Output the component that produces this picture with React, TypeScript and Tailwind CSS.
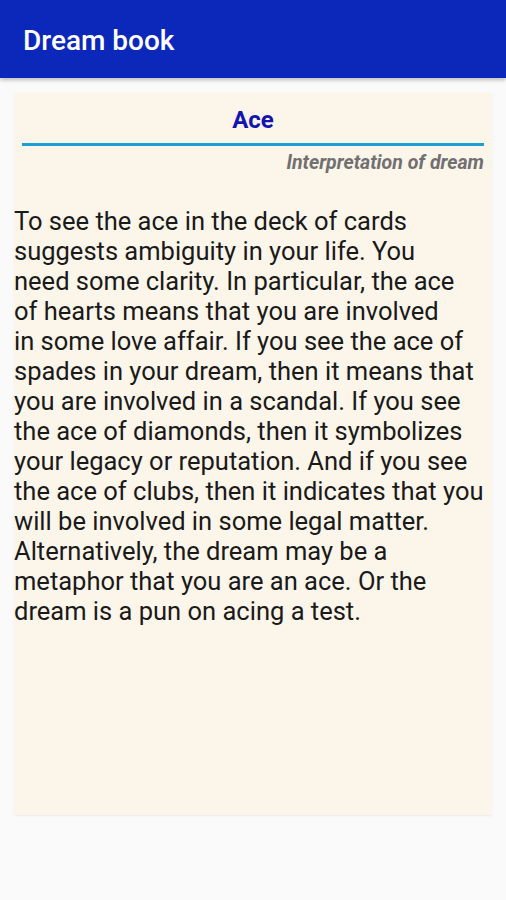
const lines = [
  'To see the ace in the deck of cards',
  'suggests ambiguity in your life. You',
  'need some clarity. In particular, the ace',
  'of hearts means that you are involved',
  'in some love affair. If you see the ace of',
  'spades in your dream, then it means that',
  'you are involved in a scandal. If you see',
  'the ace of diamonds, then it symbolizes',
  'your legacy or reputation. And if you see',
  'the ace of clubs, then it indicates that you',
  'will be involved in some legal matter.',
  'Alternatively, the dream may be a',
  'metaphor that you are an ace. Or the',
  'dream is a pun on acing a test.',
]

export default function App() {
  return (
    <div className="min-h-[900px] bg-[#fafafa]" style={{ fontFamily: 'Roboto, "Liberation Sans", sans-serif' }}>
      <header className="flex h-[78px] items-center bg-[#0b28bb] px-[23px] pt-[3px] shadow-[0_2px_4px_rgba(0,0,0,0.25)]">
        <h1 className="text-[28px] font-medium text-white">Dream book</h1>
      </header>

      <main className="px-[14px] pt-[15px]">
        <section className="h-[722px] bg-[#fcf5e9] shadow-[0_1px_2px_rgba(0,0,0,0.06)]">
          <div className="px-[8px] pt-[9px]">
            <h2 className="text-center text-[24px] font-bold leading-[36px] text-[#1414b0]">Ace</h2>
            <div className="mt-[5px] h-[3px] bg-[#1c9fd6]" />
            <p className="mt-[5px] text-right text-[19.5px] font-bold italic leading-[24px] text-[#707070]">
              Interpretation of dream
            </p>
          </div>
          <p className="mt-[31px] whitespace-nowrap text-[25.5px] leading-[30px] text-[#1a1a1a]">
            {lines.map((line) => (
              <span key={line} className="block">
                {line}
              </span>
            ))}
          </p>
        </section>
      </main>
    </div>
  )
}
